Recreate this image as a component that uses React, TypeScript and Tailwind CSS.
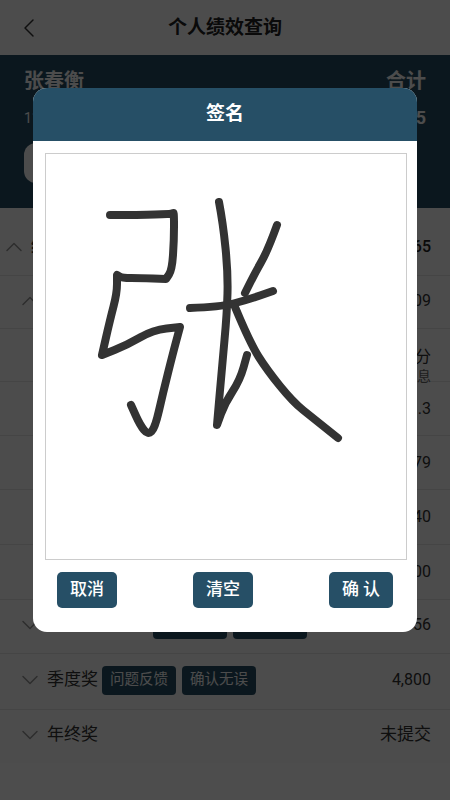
import { ChevronDown, ChevronLeft, ChevronUp } from "lucide-react"

const rows = [
  { h: "h-[53px] pb-[3px]", label: "基本绩效", value: "5,609", open: true },
  { h: "h-[53px] pt-[20px]", label: "考核得分", value: "95分", sub: "详细信息" },
  { h: "h-[54px]", label: "系数", value: "1.3" },
  { h: "h-[54px]", label: "出勤奖励", value: "879" },
  { h: "h-[55px]", label: "岗位补贴", value: "1,240" },
  { h: "h-[55px]", label: "交通补贴", value: "300" },
]

// signature strokes in page coordinates, a repeated point keeps a sharp corner
const strokes: number[][][] = [
  [[110, 215], [140, 215], [170, 214], [173, 213], [174, 213], [174, 240], [172, 270], [166, 279], [166, 279], [140, 278], [122, 278], [117, 275], [117, 275], [117, 293], [110, 320], [102, 355], [102, 355], [127, 345], [153, 330], [180, 327], [180, 327], [173, 353], [163, 393], [155, 428], [148, 435], [140, 425], [131, 405]],
  [[219, 202], [223, 223], [228, 273], [227, 313], [222, 367], [217, 425], [217, 425], [225, 403], [240, 380], [247, 355]],
  [[277, 225], [268, 250], [255, 273], [245, 293]],
  [[190, 308], [220, 307], [247, 300], [273, 291]],
  [[235, 307], [250, 343], [267, 370], [293, 402], [313, 418], [338, 438]],
]

function toPath(pts: number[][]) {
  let d = `M${pts[0][0]} ${pts[0][1]}`
  for (let i = 1; i < pts.length - 1; i++) {
    const mx = (pts[i][0] + pts[i + 1][0]) / 2
    const my = (pts[i][1] + pts[i + 1][1]) / 2
    d += ` Q${pts[i][0]} ${pts[i][1]} ${mx} ${my}`
  }
  const last = pts[pts.length - 1]
  return d + ` L${last[0]} ${last[1]}`
}

function Tags() {
  return (
    <div className="flex gap-[6px]">
      <span className="flex h-[29px] w-[74px] items-center justify-center rounded-[4px] bg-[#264f66] text-[14.5px] text-white">问题反馈</span>
      <span className="flex h-[29px] w-[74px] items-center justify-center rounded-[4px] bg-[#264f66] text-[14.5px] text-white">确认无误</span>
    </div>
  )
}

export default function App() {
  return (
    <div className="relative h-[800px] w-[450px] overflow-hidden bg-white font-['Roboto','Noto_Sans_CJK_SC',sans-serif] text-[#333]">

      <header className="relative flex h-[55px] items-center justify-center pt-[2px]">
        <ChevronLeft className="absolute left-[13px] top-[12px] h-[32px] w-[32px]" strokeWidth={1.1} />
        <h1 className="text-[19px] font-bold text-[#222]">个人绩效查询</h1>
      </header>

      <section className="flex h-[153px] justify-between bg-[#264f66] pl-6 pr-[24px] pt-[12px] text-white">
        <div>
          <p className="h-7 text-xl font-bold leading-7">张春衡</p>
          <p className="mt-[13px] h-5 text-sm leading-5">11月</p>
          <button className="mt-[15px] h-[40px] w-[96px] rounded-xl bg-white text-sm text-[#264f66]">查看详情</button>
        </div>
        <div className="text-right">
          <p className="h-7 text-xl font-bold leading-7">合计</p>
          <p className="mt-[13px] h-5 text-lg font-bold leading-5">12,365</p>
        </div>
      </section>

      <div className="flex h-[68px] items-center justify-between border-b border-[#e8e8e8] pr-[19px] pt-[10px]">
        <div className="flex items-center gap-[3px]">
          <ChevronUp className="h-[28px] w-[28px] text-[#999]" strokeWidth={1.3} />
          <span className="text-[17px] font-bold">绩效合计</span>
        </div>
        <span className="font-medium text-[#222]">12,365</span>
      </div>

      {rows.map((r) => (
        <div key={r.label} className={"flex items-center justify-between border-b border-[#e8e8e8] pl-4 pr-[19px] " + r.h}>
          <div className="flex items-center gap-[3px]">
            {r.open ? <ChevronUp className="h-[28px] w-[28px] text-[#999]" strokeWidth={1.3} /> : <span className="w-[28px]" />}
            <span className="text-[17px]">{r.label}</span>
          </div>
          <div className="text-right">
            <p className="leading-5">{r.value}</p>
            {r.sub && <p className="mt-[1px] text-sm leading-4 text-[#666]">{r.sub}</p>}
          </div>
        </div>
      ))}

      <div className="flex h-[54px] items-center justify-between border-b border-[#e8e8e8] pb-[4px] pl-4 pr-[19px]">
        <div className="flex items-center gap-[3px]">
          <ChevronDown className="h-[28px] w-[28px] text-[#999]" strokeWidth={1.3} />
          <span className="text-[17px]">月度绩效奖金</span>
          <span className="ml-[1px]"><Tags /></span>
        </div>
        <span>2,356</span>
      </div>

      <div className="flex h-[56px] items-center justify-between border-b border-[#e8e8e8] pb-[3px] pl-4 pr-[19px]">
        <div className="flex items-center gap-[3px]">
          <ChevronDown className="h-[28px] w-[28px] text-[#999]" strokeWidth={1.3} />
          <span className="text-[17px]">季度奖</span>
          <span className="ml-[1px]"><Tags /></span>
        </div>
        <span>4,800</span>
      </div>

      <div className="flex h-[50px] items-center justify-between pb-[1px] pl-4 pr-[19px]">
        <div className="flex items-center gap-[3px]">
          <ChevronDown className="h-[28px] w-[28px] text-[#999]" strokeWidth={1.3} />
          <span className="text-[17px]">年终奖</span>
        </div>
        <span className="text-[17px]">未提交</span>
      </div>

      <div className="absolute inset-0 bg-black/70" />

      <div className="absolute left-[33px] top-[88px] w-[384px] overflow-hidden rounded-[14px] bg-white">
        <div className="flex h-[53px] items-center justify-center bg-[#264f66] text-[19px] font-bold text-white">签名</div>
        <div className="px-3 pt-3">
          <div className="h-[407px] w-[362px] border border-[#ccc]">
            <svg viewBox="46 154 360 405" className="h-[405px] w-[360px]" fill="none" stroke="#333" strokeWidth="8" strokeLinecap="round" strokeLinejoin="round">
              {strokes.map((s, i) => <path key={i} d={toPath(s)} />)}
            </svg>
          </div>
        </div>
        <div className="flex justify-between px-6 pb-6 pt-3 text-[17px] font-medium text-white">
          <button className="h-9 w-[60px] rounded-[5px] bg-[#264f66]">取消</button>
          <button className="h-9 w-[60px] rounded-[5px] bg-[#264f66]">清空</button>
          <button className="h-9 w-[64px] rounded-[5px] bg-[#264f66]">确 认</button>
        </div>
      </div>
    </div>
  )
}
